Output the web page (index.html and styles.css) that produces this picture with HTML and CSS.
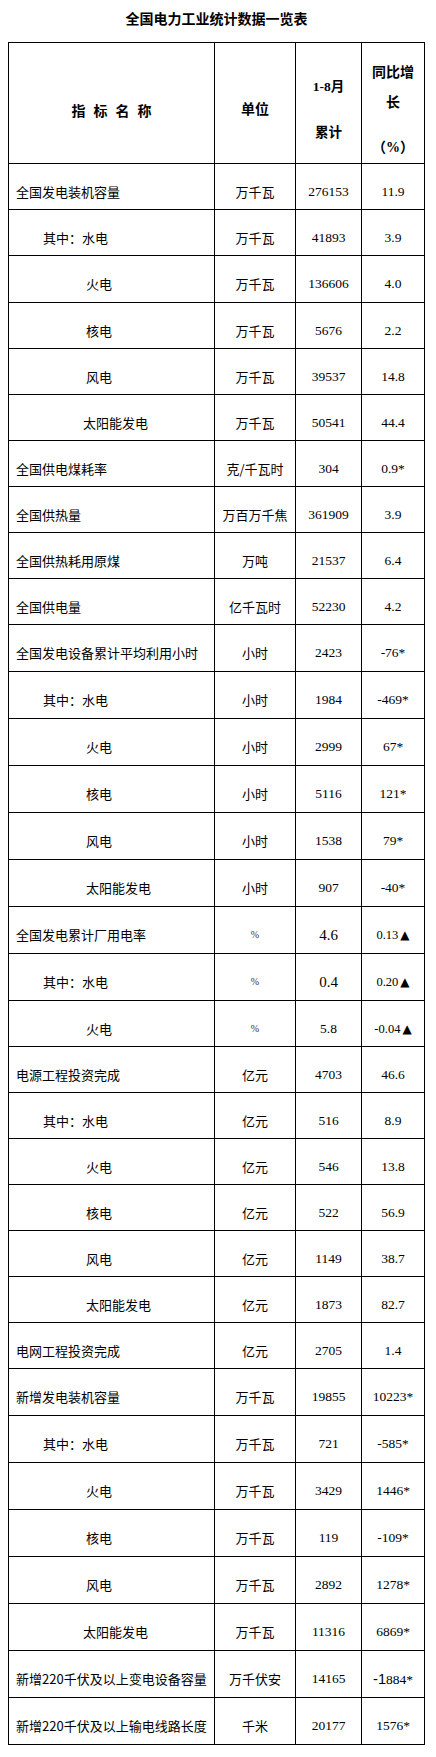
FILE: index.html
```html
<!DOCTYPE html>
<html lang="zh-CN">
<head>
<meta charset="utf-8">
<title>全国电力工业统计数据一览表</title>
<link rel="stylesheet" href="styles.css">
</head>
<body>
<div class="page">
  <div class="title">全国电力工业统计数据一览表</div>
  <div class="tbl">
    <div class="row head">
      <div class="hc h-name"><span class="hl">指标名称</span></div>
      <div class="hc"><span class="hl">单位</span></div>
      <div class="hc h-acc"><span class="hl">1-8月</span><span class="hl">累计</span></div>
      <div class="hc h-pct"><span class="hl30">同比增</span><span class="hl30">长</span><span class="hl30 pct-line">（%）</span></div>
    </div>

    <div class="row"><div class="c name">全国发电装机容量</div><div class="c unit">万千瓦</div><div class="c">276153</div><div class="c">11.9</div></div>
    <div class="row"><div class="c name l1">其中：水电</div><div class="c unit">万千瓦</div><div class="c">41893</div><div class="c">3.9</div></div>
    <div class="row t47"><div class="c name l2">火电</div><div class="c unit">万千瓦</div><div class="c">136606</div><div class="c">4.0</div></div>
    <div class="row"><div class="c name l2">核电</div><div class="c unit">万千瓦</div><div class="c">5676</div><div class="c">2.2</div></div>
    <div class="row"><div class="c name l2">风电</div><div class="c unit">万千瓦</div><div class="c">39537</div><div class="c">14.8</div></div>
    <div class="row"><div class="c name l2b">太阳能发电</div><div class="c unit">万千瓦</div><div class="c">50541</div><div class="c">44.4</div></div>
    <div class="row"><div class="c name">全国供电煤耗率</div><div class="c unit">克/千瓦时</div><div class="c">304</div><div class="c">0.9*</div></div>
    <div class="row"><div class="c name">全国供热量</div><div class="c unit">万百万千焦</div><div class="c">361909</div><div class="c">3.9</div></div>
    <div class="row"><div class="c name">全国供热耗用原煤</div><div class="c unit">万吨</div><div class="c">21537</div><div class="c">6.4</div></div>
    <div class="row"><div class="c name">全国供电量</div><div class="c unit">亿千瓦时</div><div class="c">52230</div><div class="c">4.2</div></div>

    <div class="row t47"><div class="c name">全国发电设备累计平均利用小时</div><div class="c unit">小时</div><div class="c">2423</div><div class="c">-76*</div></div>
    <div class="row t47"><div class="c name l1">其中：水电</div><div class="c unit">小时</div><div class="c">1984</div><div class="c">-469*</div></div>
    <div class="row t47"><div class="c name l2">火电</div><div class="c unit">小时</div><div class="c">2999</div><div class="c">67*</div></div>
    <div class="row t47"><div class="c name l2">核电</div><div class="c unit">小时</div><div class="c">5116</div><div class="c">121*</div></div>
    <div class="row t47"><div class="c name l2">风电</div><div class="c unit">小时</div><div class="c">1538</div><div class="c">79*</div></div>
    <div class="row t47"><div class="c name l2">太阳能发电</div><div class="c unit">小时</div><div class="c">907</div><div class="c">-40*</div></div>
    <div class="row t47"><div class="c name">全国发电累计厂用电率</div><div class="c unit pctunit">%</div><div class="c big">4.6</div><div class="c tri">0.13<span class="tri-g">▲</span></div></div>
    <div class="row t47"><div class="c name l1">其中：水电</div><div class="c unit pctunit">%</div><div class="c big">0.4</div><div class="c tri">0.20<span class="tri-g">▲</span></div></div>
    <div class="row"><div class="c name l2">火电</div><div class="c unit pctunit">%</div><div class="c">5.8</div><div class="c tri">-0.04<span class="tri-g">▲</span></div></div>

    <div class="row"><div class="c name">电源工程投资完成</div><div class="c unit">亿元</div><div class="c">4703</div><div class="c">46.6</div></div>
    <div class="row"><div class="c name l1">其中：水电</div><div class="c unit">亿元</div><div class="c">516</div><div class="c">8.9</div></div>
    <div class="row"><div class="c name l2">火电</div><div class="c unit">亿元</div><div class="c">546</div><div class="c">13.8</div></div>
    <div class="row"><div class="c name l2">核电</div><div class="c unit">亿元</div><div class="c">522</div><div class="c">56.9</div></div>
    <div class="row"><div class="c name l2">风电</div><div class="c unit">亿元</div><div class="c">1149</div><div class="c">38.7</div></div>
    <div class="row"><div class="c name l2">太阳能发电</div><div class="c unit">亿元</div><div class="c">1873</div><div class="c">82.7</div></div>
    <div class="row"><div class="c name">电网工程投资完成</div><div class="c unit">亿元</div><div class="c">2705</div><div class="c">1.4</div></div>

    <div class="row t47"><div class="c name">新增发电装机容量</div><div class="c unit">万千瓦</div><div class="c">19855</div><div class="c">10223*</div></div>
    <div class="row t47"><div class="c name l1">其中：水电</div><div class="c unit">万千瓦</div><div class="c">721</div><div class="c">-585*</div></div>
    <div class="row t47"><div class="c name l2">火电</div><div class="c unit">万千瓦</div><div class="c">3429</div><div class="c">1446*</div></div>
    <div class="row t47"><div class="c name l2">核电</div><div class="c unit">万千瓦</div><div class="c">119</div><div class="c">-109*</div></div>
    <div class="row t47"><div class="c name l2">风电</div><div class="c unit">万千瓦</div><div class="c">2892</div><div class="c">1278*</div></div>
    <div class="row t47"><div class="c name l2b">太阳能发电</div><div class="c unit">万千瓦</div><div class="c">11316</div><div class="c">6869*</div></div>
    <div class="row t47"><div class="c name">新增220千伏及以上变电设备容量</div><div class="c unit">万千伏安</div><div class="c">14165</div><div class="c"><span class="odd1">-1</span>884*</div></div>
    <div class="row t47"><div class="c name">新增220千伏及以上输电线路长度</div><div class="c unit">千米</div><div class="c">20177</div><div class="c">1576*</div></div>
  </div>
</div>
</body>
</html>
```

FILE: styles.css
```css
html, body {
  margin: 0;
  padding: 0;
  background: #ffffff;
  color: #000000;
}

.page {
  margin-left: 8px;
  width: 417px;
}

.title {
  height: 42px;
  line-height: 37px;
  text-align: center;
  font-family: "Noto Sans CJK SC", sans-serif;
  font-weight: 700;
  font-size: 14px;
}

.tbl {
  width: 416px;
  border-top: 1px solid #000;
  border-left: 1px solid #000;
}

.row {
  display: grid;
  grid-template-columns: 206px 81px 66px 63px;
  height: 46px;
  box-sizing: border-box;
  border-bottom: 1px solid #000;
}

.row.t47 {
  height: 47px;
}

.row.head {
  height: 121px;
}

.hc {
  border-right: 1px solid #000;
  box-sizing: border-box;
  padding-top: 14px;
  display: flex;
  flex-direction: column;
  justify-content: center;
  align-items: center;
  font-family: "Liberation Serif", "Noto Sans CJK SC", serif;
  font-weight: 700;
  font-size: 14px;
  white-space: nowrap;
}

.hl {
  display: block;
  line-height: 20px;
}

.h-name .hl {
  letter-spacing: 8px;
  padding-left: 8px;
  font-family: "Noto Sans CJK SC", sans-serif;
}

.h-acc {
  gap: 26px;
  font-size: 13.5px;
}

.hl30 {
  display: block;
  line-height: 30px;
}

.pct-line {
  margin-top: 15px;
}

.c {
  border-right: 1px solid #000;
  box-sizing: border-box;
  padding-top: 18px;
  line-height: 20px;
  white-space: nowrap;
  text-align: center;
  font-family: "Liberation Serif", "Noto Sans CJK SC", serif;
  font-size: 13.5px;
}

.c.name {
  text-align: left;
  padding-left: 7px;
  font-family: "Noto Sans CJK SC", sans-serif;
  font-size: 13px;
}

.c.name.l1 {
  padding-left: 34px;
}

.c.name.l2 {
  padding-left: 77px;
}

.c.name.l2b {
  padding-left: 74px;
}

.c.unit {
  font-family: "Noto Sans CJK SC", sans-serif;
  font-size: 13px;
}

.c.unit.pctunit {
  font-family: "Liberation Serif", serif;
  font-size: 10px;
  color: #333;
}

.c.big {
  font-size: 15px;
}

.c.tri {
  font-size: 12.5px;
}

.tri-g {
  font-family: "DejaVu Sans", sans-serif;
  font-size: 12px;
  margin-left: 2px;
}

.odd1 {
  font-family: "Liberation Sans", sans-serif;
  font-size: 14.5px;
}
```
